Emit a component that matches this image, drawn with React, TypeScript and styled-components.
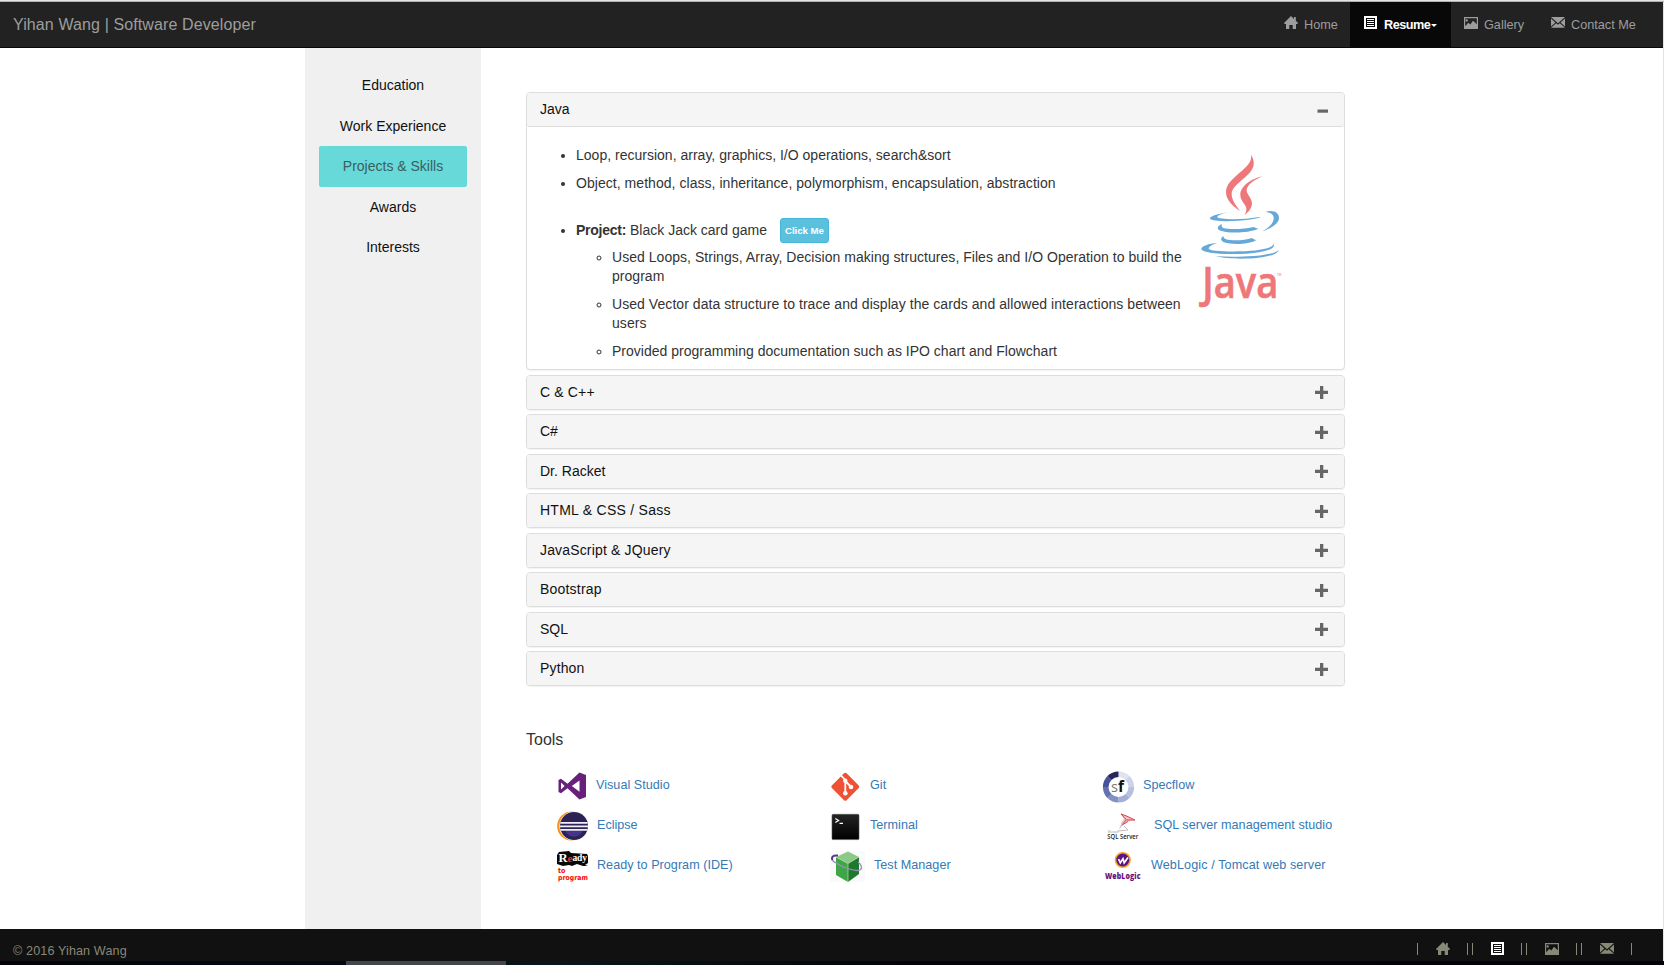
import React, { useState } from 'react';
import styled, { createGlobalStyle } from 'styled-components';

const GlobalStyle = createGlobalStyle`
  *, *::before, *::after { box-sizing: border-box; }
  html, body { margin: 0; padding: 0; background: #fff; }
  body {
    font-family: "Liberation Sans", Arial, Helvetica, sans-serif;
    font-size: 14px;
    line-height: 19px;
    color: #333;
    overflow: hidden;
  }
  a { text-decoration: none; color: inherit; }
`;

const Page = styled.div`
  width: 1664px;
  height: 965px;
  display: flex;
  flex-direction: column;
`;

const TopEdge = styled.div`
  flex: none;
  height: 2px;
  background: #e4e6e6;
  border-bottom: 1px solid #b0b3b3;
`;

const Viewport = styled.div`
  flex: 1;
  display: flex;
  flex-direction: column;
  border-right: 1px solid #e3e3e3;
`;

const Navbar = styled.header`
  flex: none;
  height: 46px;
  display: flex;
  justify-content: space-between;
  background: #222;
  border-bottom: 1px solid #080808;
  padding: 0 13px;
`;

const Brand = styled.a`
  font-size: 16px;
  line-height: 46px;
  letter-spacing: 0.11px;
  color: #9d9d9d;
`;

const NavList = styled.nav`
  display: flex;
`;

const NavItem = styled.a<{ $width: number; $active?: boolean }>`
  width: ${(p) => p.$width}px;
  padding-left: ${(p) => (p.$active ? 14 : 13)}px;
  display: flex;
  align-items: flex-start;
  font-size: 12.7px;
  line-height: 46px;
  color: ${(p) => (p.$active ? '#fff' : '#9d9d9d')};
  background: ${(p) => (p.$active ? '#080808' : 'transparent')};
  font-weight: ${(p) => (p.$active ? 700 : 400)};
  letter-spacing: ${(p) => (p.$active ? '-0.52px' : '0')};

  svg { margin: 14px 6px 0 0; flex: none; }
`;

const Caret = styled.span`
  margin: 22px 0 0 1px;
  border-top: 3px solid currentColor;
  border-left: 3px solid transparent;
  border-right: 3px solid transparent;
`;

const Main = styled.main`
  flex: 1;
  display: flex;
  padding-left: 305px;
`;

const Sidebar = styled.aside`
  width: 176px;
  flex: none;
  background: #f0f0f0;
  padding: 17px 14px 0;
`;

const SideLink = styled.a<{ $active?: boolean }>`
  display: block;
  height: 40.5px;
  line-height: 40.5px;
  text-align: center;
  border-radius: 2px;
  color: ${(p) => (p.$active ? '#3a5f60' : '#111')};
  background: ${(p) => (p.$active ? '#67d9d9' : 'transparent')};
`;

const Content = styled.section`
  width: 819px;
  margin: 44px 0 0 45px;
`;

const Panel = styled.div`
  border: 1px solid #ddd;
  border-radius: 4px;
  box-shadow: 0 1px 1px rgba(0, 0, 0, 0.05);
  background: #fff;
  margin-bottom: 4.5px;
`;

const PanelHeading = styled.div<{ $open?: boolean; $spacing?: number }>`
  height: ${(p) => (p.$open ? 34 : 33)}px;
  display: flex;
  justify-content: space-between;
  align-items: flex-start;
  padding: 0 16px 0 13px;
  line-height: 32px;
  letter-spacing: ${(p) => p.$spacing ?? 0}px;
  color: #111;
  background: #f5f5f5;
  border-radius: 3px;
  border-bottom: ${(p) => (p.$open ? '1px solid #ddd' : '0')};
  cursor: pointer;

  svg { margin-top: 10.5px; }
`;

const PanelBody = styled.div`
  height: 242.4px;
  display: flex;
  padding: 19px 0 0 49px;
`;

const SkillList = styled.ul`
  width: 610px;
  flex: none;
  margin: 0;
  padding: 0;
  list-style: disc;
`;

const SkillItem = styled.li<{ $gap?: number; $spacing?: number }>`
  margin-bottom: ${(p) => p.$gap ?? 9}px;
  letter-spacing: ${(p) => p.$spacing ?? 0}px;
`;

const SubList = styled.ul`
  margin: 8px 0 0;
  padding-left: 36px;
  list-style: circle;
`;

const ProjectLine = styled.span`
  display: inline-flex;
  align-items: center;
  height: 19px;
  vertical-align: top;
  white-space: pre;

  b { letter-spacing: -0.25px; }
`;

const ClickButton = styled.button`
  width: 49px;
  height: 25px;
  margin-left: 13px;
  padding: 0;
  border: 1px solid #46b8da;
  border-radius: 3px;
  background: #5bc0de;
  color: #fff;
  font: 700 9.6px/22px "Liberation Sans", Arial, sans-serif;
`;

const JavaArt = styled.svg`
  margin: 4px 0 0 4px;
  flex: none;
  overflow: visible;
`;

const ToolsTitle = styled.h4`
  margin: 44.1px 0 0;
  font-weight: 400;
  font-size: 16px;
  line-height: 20px;
`;

const ToolGrid = styled.div`
  display: grid;
  grid-template-columns: 273px 272px 1fr;
  grid-auto-rows: 40px;
  margin: 16px 0 0 31px;
`;

const ToolLink = styled.a<{ $spacing?: number }>`
  display: flex;
  font-size: 12.6px;
  letter-spacing: ${(p) => p.$spacing ?? 0.03}px;
  line-height: 39px;
  color: #337ab7;
  white-space: nowrap;

  svg { flex: none; margin-top: -0.4px; }
`;

const Footer = styled.footer`
  flex: none;
  height: 32px;
  display: flex;
  justify-content: space-between;
  background: #111;
  color: #888877;
  padding: 0 31px 0 13px;
  font-size: 12.6px;
  letter-spacing: 0.12px;
  line-height: 44px;
`;

const FooterIcons = styled.div`
  display: flex;
  gap: 4px;
  padding-top: 14px;
`;

const FooterIcon = styled.a<{ $active?: boolean }>`
  width: 51px;
  height: 12px;
  display: flex;
  justify-content: center;
  border-left: 1px solid #888877;
  border-right: 1px solid #888877;

  &:nth-child(2) { width: 50px; padding-left: 1px; }

  svg {
    margin-top: -1px;
    flex: none;
    color: ${(p) => (p.$active ? '#fff' : '#888877')};
  }
`;

const Taskbar = styled.div`
  flex: none;
  height: 4px;
  padding-left: 346px;
  background: linear-gradient(90deg, #02030a 0, #020815 346px, #06161c 560px, #02040a 900px, #010208 100%);
`;

const TaskbarWindow = styled.div`
  width: 160px;
  height: 4px;
  background: #43474d;
`;

type GlyphName = 'home' | 'list' | 'picture' | 'envelope';

const Glyph = ({ name }: { name: GlyphName }) => (
  <svg width="14" height="14" viewBox="0 0 14 14" fill="currentColor">
    {name === 'home' && (
      <path d="M7 0 L10 3 V1 H11.8 V4.8 L14 7 L13.4 8 H12 V13 H8.7 V9 H5.3 V13 H2 V8 H.6 L0 7Z" />
    )}
    {name === 'list' && (
      <path fillRule="evenodd" d="M0 0H13V13H0Z M2 2V11H11V2Z M3 3H10V4H3Z M3 5H10V6H3Z M3 7H10V8H3Z M3 9H10V10H3Z" />
    )}
    {name === 'picture' && (
      <path fillRule="evenodd" d="M0 1H14V13H0Z M1.2 2.2V10.2L4.3 6.8L6.3 8.6L9 4.8L12.8 8.2V2.2Z M2.7 3.2A1.2 1.2 0 1 1 2.7 5.6A1.2 1.2 0 1 1 2.7 3.2Z" />
    )}
    {name === 'envelope' && (
      <path d="M0 1H14L7 7.2Z M0 2.5L4.4 6.5L0 10.5Z M14 2.5L9.6 6.5L14 10.5Z M5.2 7.2L7 8.8L8.8 7.2L14 11.8H0Z" />
    )}
  </svg>
);

const Toggle = ({ open }: { open: boolean }) => (
  <svg width="13" height="13" viewBox="0 0 13 13" fill="#666">
    {open ? <path d="M2.5 5.5h10.5v3.2H2.5Z" /> : <path d="M5 0h3.3v4.8H13v3.3H8.3V13H5V8.1H0V4.8h5Z" />}
  </svg>
);

const JavaLogo = () => (
  <JavaArt width="94" height="160" viewBox="30 30 282 480">
    <g fill="#ee7779">
      <path d="M213 44C222 85 138 110 138 156C138 182 162 200 180 214C168 196 154 180 155 160C158 128 226 105 221 66C220 56 217 50 213 44Z" />
      <path d="M248 109C215 116 180 138 181 166C182 185 197 192 199 205C200 213 197 219 193 226C205 217 216 205 216 190C215 172 200 165 200 150C201 134 225 118 248 109Z" />
      <text x="67" y="474" fontFamily="Open Sans, Noto Sans, sans-serif" fontWeight="600" fontSize="132" textLength="228" lengthAdjust="spacingAndGlyphs" stroke="#ee7779" strokeWidth="2">Java</text>
      <text x="291" y="409" fontFamily="Liberation Sans, sans-serif" fontSize="9">TM</text>
    </g>
    <g fill="#68a8d6">
      <path d="M143 217C110 222 88 230 90 236C95 247 205 246 244 231L232 232C190 240 112 239 112 231C112 226 128 221 143 217Z" />
      <path d="M256 216C280 208 298 218 297 235C296 252 272 266 247 274C268 262 282 248 281 233C280 221 270 218 256 216Z" />
      <path d="M126 252C112 258 108 267 122 272C150 281 205 279 235 266L220 261C190 268 150 269 130 264C124 261 124 256 126 252Z" />
      <path d="M130 288C122 293 120 301 132 307C155 315 205 314 228 301L215 294C195 302 155 303 138 298C132 295 130 292 130 288Z" />
      <path d="M112 309C85 310 62 320 64 328C68 340 130 345 200 341C255 337 290 326 280 312C278 326 230 333 180 334C130 335 88 332 86 326C86 320 98 313 112 309Z" />
      <path d="M107 349C160 362 290 358 296 330C285 345 200 354 107 349Z" />
    </g>
  </JavaArt>
);

const VisualStudioIcon = () => (
  <svg width="39" height="40" viewBox="0 0 39 40">
    <path fillRule="evenodd" fill="#68217a" d="M1.5 14L4 12.8L10.5 17.8L22.5 6.5L29 9V31L22.5 33.5L10.5 22.2L4 27.2L1.5 26Z M4 16.5V23.5L7.6 20Z M22.5 14.5L14.8 20L22.5 25.7Z" />
  </svg>
);

const EclipseIcon = () => (
  <svg width="40" height="40" viewBox="0 0 40 40">
    <circle cx="14.6" cy="20" r="14.5" fill="#f7941e" />
    <circle cx="17" cy="20" r="14.6" fill="#fff" />
    <circle cx="17" cy="20" r="14" fill="#2c2255" />
    <path d="M8.5 25A9 8.5 0 0 0 25.5 25Z" fill="#45358a" />
    <path d="M3.4 16.9H30.6M3 20.4H31M3.4 23.9H30.6" stroke="#f0eef8" strokeWidth="1.7" />
  </svg>
);

const ReadyIcon = () => (
  <svg width="40" height="40" viewBox="0 0 40 40">
    <path d="M2 6L12 5L14 7L30 8L31 10V17L28 19L31 20H26L20 18L15 20L12 19L6 20L0 18V9Z" fill="#080808" />
    <text x="1.5" y="15.5" fontFamily="Liberation Serif, serif" fontWeight="700" fontSize="12.5" fill="#fff">R</text>
    <text x="10.5" y="15.5" fontFamily="Liberation Serif, serif" fontWeight="700" fontSize="11" fill="#ff2a1e">e</text>
    <text x="15.5" y="15" fontFamily="Liberation Serif, serif" fontWeight="700" fontSize="9.5" textLength="14.5" fill="#fff">ady</text>
    <text x="1" y="27" fontFamily="DejaVu Sans, sans-serif" fontWeight="700" fontSize="7" textLength="7.5" lengthAdjust="spacingAndGlyphs" fill="#f00">to</text>
    <text x="1" y="33.5" fontFamily="DejaVu Sans, sans-serif" fontWeight="700" fontSize="7" textLength="30" lengthAdjust="spacingAndGlyphs" fill="#f00">program</text>
  </svg>
);

const GitIcon = () => (
  <svg width="40" height="40" viewBox="0 0 40 40">
    <rect x="4.9" y="10.4" width="20.8" height="20.8" rx="1.8" transform="rotate(45 15.3 20.8)" fill="#f05133" />
    <path d="M11.2 9.7L15.3 14V27M15.3 15L20.7 20.5" stroke="#fff" strokeWidth="1.8" fill="none" />
    <g fill="#fff">
      <circle cx="15.3" cy="14.7" r="2.2" />
      <circle cx="15.3" cy="27.2" r="2.3" />
      <circle cx="21" cy="21" r="2.3" />
    </g>
  </svg>
);

const TerminalIcon = () => (
  <svg width="40" height="40" viewBox="0 0 40 40">
    <defs>
      <linearGradient id="term" x1="0" y1="0" x2="0" y2="1">
        <stop offset="0" stopColor="#242424" />
        <stop offset="1" stopColor="#000" />
      </linearGradient>
    </defs>
    <rect x="2" y="8.3" width="27" height="25.3" rx="1.2" fill="url(#term)" stroke="#555" strokeWidth=".6" />
    <path d="M5.3 12.5L8.6 14.5L5.3 16.4M9.5 17.3H13" stroke="#fff" strokeWidth="1.2" fill="none" />
  </svg>
);

const TestManagerIcon = () => (
  <svg width="44" height="40" viewBox="0 0 44 40">
    <rect x="0" y="5" width="35" height="31" fill="#fafafa" />
    <path d="M6 11L18 5.5L29 11L18 17.5Z" fill="#8cc987" />
    <path d="M6 11L18 17.5V36L6 29Z" fill="#3fa648" />
    <path d="M18 17.5L29 11V28L18 36Z" fill="#1d7a2c" />
    <path d="M6 11L18 17.5L29 11M18 17.5V36" stroke="#b5e0ae" strokeWidth=".7" fill="none" />
    <path d="M7 10C1 9 0 14 6 17C12 21 25 26 30 24C33 22 31 18 28 16" stroke="#9b8fc0" strokeWidth="1.3" fill="none" />
    <path d="M8 9.5C3 9 1 11 2.5 14" stroke="#5b3292" strokeWidth="1.9" fill="none" />
  </svg>
);

const SPEC_COLORS = ['#e0e2f1', '#cfd3ea', '#b9bfe0', '#a5aed6', '#8490c3', '#6471b0', '#46539a', '#25265c'];

const SpecflowIcon = () => (
  <svg width="41" height="40" viewBox="0 0 41 40">
    {SPEC_COLORS.map((color, i) => {
      const a = ((i * 45 - 90) * Math.PI) / 180;
      const b = (((i + 1) * 45 - 90) * Math.PI) / 180;
      const point = (angle: number) => `${16.5 + 12.8 * Math.cos(angle)} ${21 + 12.8 * Math.sin(angle)}`;
      return <path key={color} d={`M${point(a)}A12.8 12.8 0 0 1 ${point(b)}`} stroke={color} strokeWidth="5.6" fill="none" />;
    })}
    <text x="9" y="26.2" fontFamily="Open Sans, sans-serif" fontSize="14.5" fill="#777">s</text>
    <text x="16" y="26.2" fontFamily="Open Sans, sans-serif" fontWeight="700" fontSize="15.5" fill="#111">f</text>
  </svg>
);

const SqlServerIcon = () => (
  <svg width="52" height="40" viewBox="0 0 52 40">
    <path d="M19 8L25 10L33 14L26 15.5L21 19L18 22L19.5 16L22 13Z" fill="#f2c3c6" />
    <path d="M19 8L24.5 14L33 14L24 9.8Z M24 14L20 19L26 15.5" fill="none" stroke="#dc4650" strokeWidth="1" />
    <path d="M17.5 22.5L21 17M16 25L26 24L22 20" stroke="#bbb" strokeWidth=".9" fill="none" />
    <text x="6" y="26.5" fontFamily="Liberation Sans, sans-serif" fontSize="2.6" fill="#999">Microsoft</text>
    <text x="5.3" y="33" fontFamily="Open Sans, sans-serif" fontWeight="600" fontSize="7.6" textLength="31" lengthAdjust="spacingAndGlyphs" fill="#222">SQL Server</text>
  </svg>
);

const WebLogicIcon = () => (
  <svg width="49" height="40" viewBox="0 0 49 40">
    <circle cx="20.8" cy="14" r="7.3" fill="#5b1480" stroke="#f4a62a" strokeWidth="1.6" />
    <path d="M16.5 13L18.3 16.8L21 12.8L22.2 16.8L26 11.5" stroke="#fff" strokeWidth="1.7" fill="none" />
    <text x="3" y="33" fontFamily="Open Sans, sans-serif" fontWeight="800" fontSize="8.4" textLength="35.5" lengthAdjust="spacingAndGlyphs" fill="#6a127b">WebLogic</text>
  </svg>
);

const TOOLS = [
  { label: 'Visual Studio', Icon: VisualStudioIcon },
  { label: 'Git', Icon: GitIcon },
  { label: 'Specflow', Icon: SpecflowIcon },
  { label: 'Eclipse', Icon: EclipseIcon, spacing: 0 },
  { label: 'Terminal', Icon: TerminalIcon },
  { label: 'SQL server management studio', Icon: SqlServerIcon },
  { label: 'Ready to Program (IDE)', Icon: ReadyIcon },
  { label: 'Test Manager', Icon: TestManagerIcon },
  { label: 'WebLogic / Tomcat web server', Icon: WebLogicIcon, spacing: 0.1 },
];

const SECTIONS = ['Education', 'Work Experience', 'Projects & Skills', 'Awards', 'Interests'];
const GLYPHS: GlyphName[] = ['home', 'list', 'picture', 'envelope'];

const SKILLS = [
  { name: 'Java' },
  { name: 'C & C++', spacing: 0.15 },
  { name: 'C#' },
  { name: 'Dr. Racket' },
  { name: 'HTML & CSS / Sass', spacing: 0.26 },
  { name: 'JavaScript & JQuery', spacing: 0.16 },
  { name: 'Bootstrap', spacing: 0.2 },
  { name: 'SQL' },
  { name: 'Python', spacing: 0.15 },
];

const JavaDetails = () => (
  <PanelBody>
    <SkillList>
      <SkillItem $spacing={0.01}>Loop, recursion, array, graphics, I/O operations, search&amp;sort</SkillItem>
      <SkillItem $gap={28} $spacing={0.045}>Object, method, class, inheritance, polymorphism, encapsulation, abstraction</SkillItem>
      <SkillItem>
        <ProjectLine><b>Project:</b> Black Jack card game<ClickButton>Click Me</ClickButton></ProjectLine>
        <SubList>
          <SkillItem $spacing={0.038}>Used Loops, Strings, Array, Decision making structures, Files and I/O Operation to build the program</SkillItem>
          <SkillItem $spacing={0.058}>Used Vector data structure to trace and display the cards and allowed interactions between users</SkillItem>
          <SkillItem $spacing={0.01}>Provided programming documentation such as IPO chart and Flowchart</SkillItem>
        </SubList>
      </SkillItem>
    </SkillList>
    <JavaLogo />
  </PanelBody>
);

export default function App() {
  const [openSkill, setOpenSkill] = useState('Java');

  return (
    <Page>
      <GlobalStyle />
      <TopEdge />
      <Viewport>
        <Navbar>
          <Brand>Yihan Wang | Software Developer</Brand>
          <NavList>
            <NavItem $width={79}><Glyph name="home" />Home</NavItem>
            <NavItem $width={101} $active><Glyph name="list" />Resume<Caret /></NavItem>
            <NavItem $width={87}><Glyph name="picture" />Gallery</NavItem>
            <NavItem $width={112}><Glyph name="envelope" />Contact Me</NavItem>
          </NavList>
        </Navbar>
        <Main>
          <Sidebar>
            {SECTIONS.map((name) => (
              <SideLink key={name} $active={name === 'Projects & Skills'}>{name}</SideLink>
            ))}
          </Sidebar>
          <Content>
            {SKILLS.map(({ name, spacing }) => {
              const open = name === openSkill;
              return (
                <Panel key={name}>
                  <PanelHeading $open={open} $spacing={spacing} onClick={() => setOpenSkill(open ? '' : name)}>
                    {name}
                    <Toggle open={open} />
                  </PanelHeading>
                  {open && name === 'Java' && <JavaDetails />}
                </Panel>
              );
            })}
            <ToolsTitle>Tools</ToolsTitle>
            <ToolGrid>
              {TOOLS.map(({ label, Icon, spacing }) => (
                <ToolLink key={label} $spacing={spacing}><Icon />{label}</ToolLink>
              ))}
            </ToolGrid>
          </Content>
        </Main>
        <Footer>
          <span>© 2016 Yihan Wang</span>
          <FooterIcons>
            {GLYPHS.map((name) => (
              <FooterIcon key={name} $active={name === 'list'}><Glyph name={name} /></FooterIcon>
            ))}
          </FooterIcons>
        </Footer>
      </Viewport>
      <Taskbar><TaskbarWindow /></Taskbar>
    </Page>
  );
}
